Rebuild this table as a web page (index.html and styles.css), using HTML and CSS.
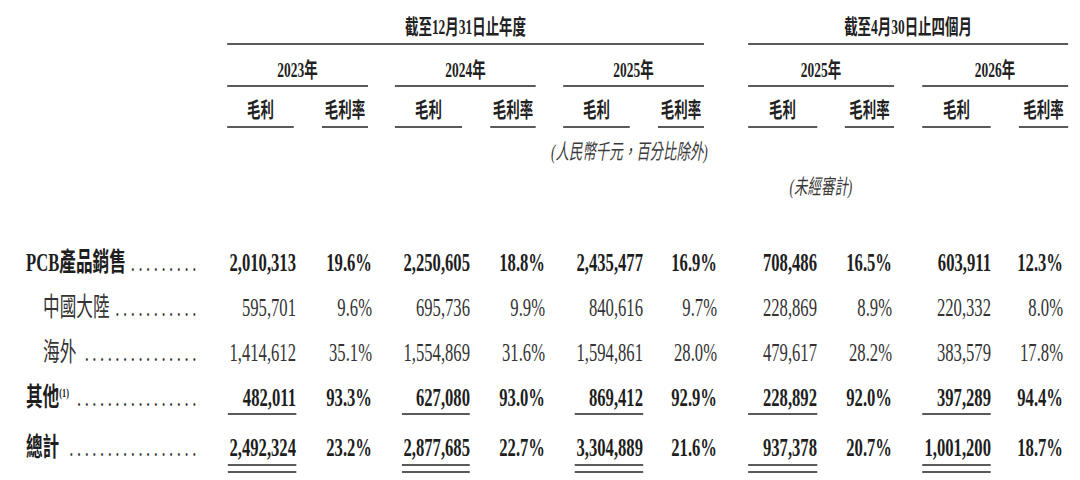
FILE: index.html
```html
<!DOCTYPE html>
<html lang="zh-Hant">
<head>
<meta charset="utf-8">
<link rel="stylesheet" href="styles.css">
</head>
<body>
<div class="page">
  <div class="head">
    <div class="group g1">
      <div class="gtitle">截至12月31日止年度</div>
      <div class="years">
        <div class="year"><div class="ytitle">2023年</div><div class="subs"><div class="sub gp">毛利</div><div class="sub pc">毛利率</div></div></div>
        <div class="year"><div class="ytitle">2024年</div><div class="subs"><div class="sub gp">毛利</div><div class="sub pc">毛利率</div></div></div>
        <div class="year"><div class="ytitle">2025年</div><div class="subs"><div class="sub gp">毛利</div><div class="sub pc">毛利率</div></div></div>
      </div>
      <div class="note">(人民幣千元，百分比除外)</div>
    </div>
    <div class="group g2">
      <div class="gtitle">截至4月30日止四個月</div>
      <div class="years">
        <div class="year"><div class="ytitle">2025年</div><div class="subs"><div class="sub gp">毛利</div><div class="sub pc">毛利率</div></div></div>
        <div class="year"><div class="ytitle">2026年</div><div class="subs"><div class="sub gp">毛利</div><div class="sub pc">毛利率</div></div></div>
      </div>
      <div class="note2">(未經審計)</div>
    </div>
  </div>

  <div class="rows">
    <div class="row bold">
      <div class="lbl"><span class="t">PCB產品銷售</span><span class="dots">.........</span></div>
      <div class="n">2,010,313</div><div class="n">19.6%</div>
      <div class="n">2,250,605</div><div class="n">18.8%</div>
      <div class="n">2,435,477</div><div class="n">16.9%</div>
      <div class="n">708,486</div><div class="n">16.5%</div>
      <div class="n">603,911</div><div class="n">12.3%</div>
    </div>
    <div class="row">
      <div class="lbl ind"><span class="t">中國大陸</span><span class="dots">...........</span></div>
      <div class="n">595,701</div><div class="n">9.6%</div>
      <div class="n">695,736</div><div class="n">9.9%</div>
      <div class="n">840,616</div><div class="n">9.7%</div>
      <div class="n">228,869</div><div class="n">8.9%</div>
      <div class="n">220,332</div><div class="n">8.0%</div>
    </div>
    <div class="row">
      <div class="lbl ind"><span class="t">海外</span><span class="dots">...............</span></div>
      <div class="n">1,414,612</div><div class="n">35.1%</div>
      <div class="n">1,554,869</div><div class="n">31.6%</div>
      <div class="n">1,594,861</div><div class="n">28.0%</div>
      <div class="n">479,617</div><div class="n">28.2%</div>
      <div class="n">383,579</div><div class="n">17.8%</div>
    </div>
    <div class="row bold">
      <div class="lbl"><span class="t">其他<sup>(1)</sup></span><span class="dots">................</span></div>
      <div class="n"><span class="u">482,011</span></div><div class="n">93.3%</div>
      <div class="n"><span class="u">627,080</span></div><div class="n">93.0%</div>
      <div class="n"><span class="u">869,412</span></div><div class="n">92.9%</div>
      <div class="n"><span class="u w">228,892</span></div><div class="n">92.0%</div>
      <div class="n"><span class="u w">397,289</span></div><div class="n">94.4%</div>
    </div>
    <div class="row bold total">
      <div class="lbl"><span class="t">總計</span><span class="dots">.................</span></div>
      <div class="n"><span class="dbl"><span class="u">2,492,324</span></span></div><div class="n">23.2%</div>
      <div class="n"><span class="dbl"><span class="u">2,877,685</span></span></div><div class="n">22.7%</div>
      <div class="n"><span class="dbl"><span class="u">3,304,889</span></span></div><div class="n">21.6%</div>
      <div class="n"><span class="dbl"><span class="u w">937,378</span></span></div><div class="n">20.7%</div>
      <div class="n"><span class="dbl"><span class="u w">1,001,200</span></span></div><div class="n">18.7%</div>
    </div>
  </div>
</div>
</body>
</html>
```

FILE: styles.css
```css
html, body {
  margin: 0;
  padding: 0;
  background: #ffffff;
  overflow: hidden;
}

.page {
  width: 1672px;
  transform: scaleX(0.64);
  transform-origin: 0 0;
  font-family: "Liberation Serif", "Noto Sans CJK TC", serif;
  color: #222222;
}

/* ---------- header ---------- */
.head {
  display: flex;
  padding-left: 354.7px;
  height: 241px;
  box-sizing: border-box;
  font-size: 21px;
}

.g1 {
  flex: none;
  width: 745.3px;
  margin-right: 68.75px;
}

.g2 {
  flex: none;
  width: 500px;
}

.gtitle {
  padding-top: 11px;
  line-height: 32px;
  border-bottom: 2px solid #5a5a5a;
  text-align: center;
  font-weight: 700;
  white-space: nowrap;
}

.years {
  display: flex;
  justify-content: space-between;
}

.g1 .year { width: 220.3px; }
.g2 .year { width: 228.1px; }

.ytitle {
  padding-top: 10px;
  line-height: 30px;
  border-bottom: 2px solid #5a5a5a;
  text-align: center;
  font-weight: 700;
}

.subs {
  display: flex;
  justify-content: space-between;
}

.sub {
  padding-top: 8px;
  padding-bottom: 1px;
  line-height: 30px;
  border-bottom: 2px solid #5a5a5a;
  text-align: center;
  font-weight: 700;
  white-space: nowrap;
}

.g1 .gp { width: 104.7px; }
.g1 .pc { width: 71.9px; }
.g2 .gp { width: 107.8px; }
.g2 .pc { width: 76.6px; }

.note {
  text-align: right;
  margin-right: -6px;
  padding-top: 9px;
  line-height: 30px;
  font-style: italic;
  color: #3a3a3a;
  white-space: nowrap;
}

.note2 {
  width: 228.1px;
  text-align: center;
  padding-top: 44px;
  line-height: 30px;
  font-style: italic;
  color: #3a3a3a;
  white-space: nowrap;
}

/* ---------- body rows ---------- */
.rows {
  font-size: 26px;
}

.row {
  display: grid;
  grid-template-columns: 356.25px 106.25px 118.75px 153.125px 117.19px 153.125px 115.625px 156.25px 117.19px 154.69px 112.5px;
  align-items: start;
  padding: 7px 0 8px;
  line-height: 30px;
  color: #333333;
}

.row.bold {
  font-weight: 700;
  color: #1e1e1e;
}

.row.total {
  padding-top: 10px;
}

.lbl {
  display: flex;
  padding-left: 40.6px;
  padding-right: 44px;
  white-space: nowrap;
}

.lbl.ind {
  padding-left: 67.2px;
}

.lbl .t {
  flex: none;
}

.lbl sup {
  font-size: 13px;
  line-height: 0;
  vertical-align: 9px;
}

.dots {
  margin-left: auto;
  letter-spacing: 5.5px;
  font-weight: 400;
  color: #333333;
}

.n {
  text-align: right;
  white-space: nowrap;
}

.u {
  display: inline-block;
  min-width: 106.25px;
  text-align: right;
  border-bottom: 2px solid #5a5a5a;
}

.u.w {
  min-width: 107.8px;
}

.dbl {
  display: inline-block;
  padding-bottom: 5px;
  border-bottom: 2px solid #5a5a5a;
}

.dbl .u {
  padding-bottom: 1px;
}
```
